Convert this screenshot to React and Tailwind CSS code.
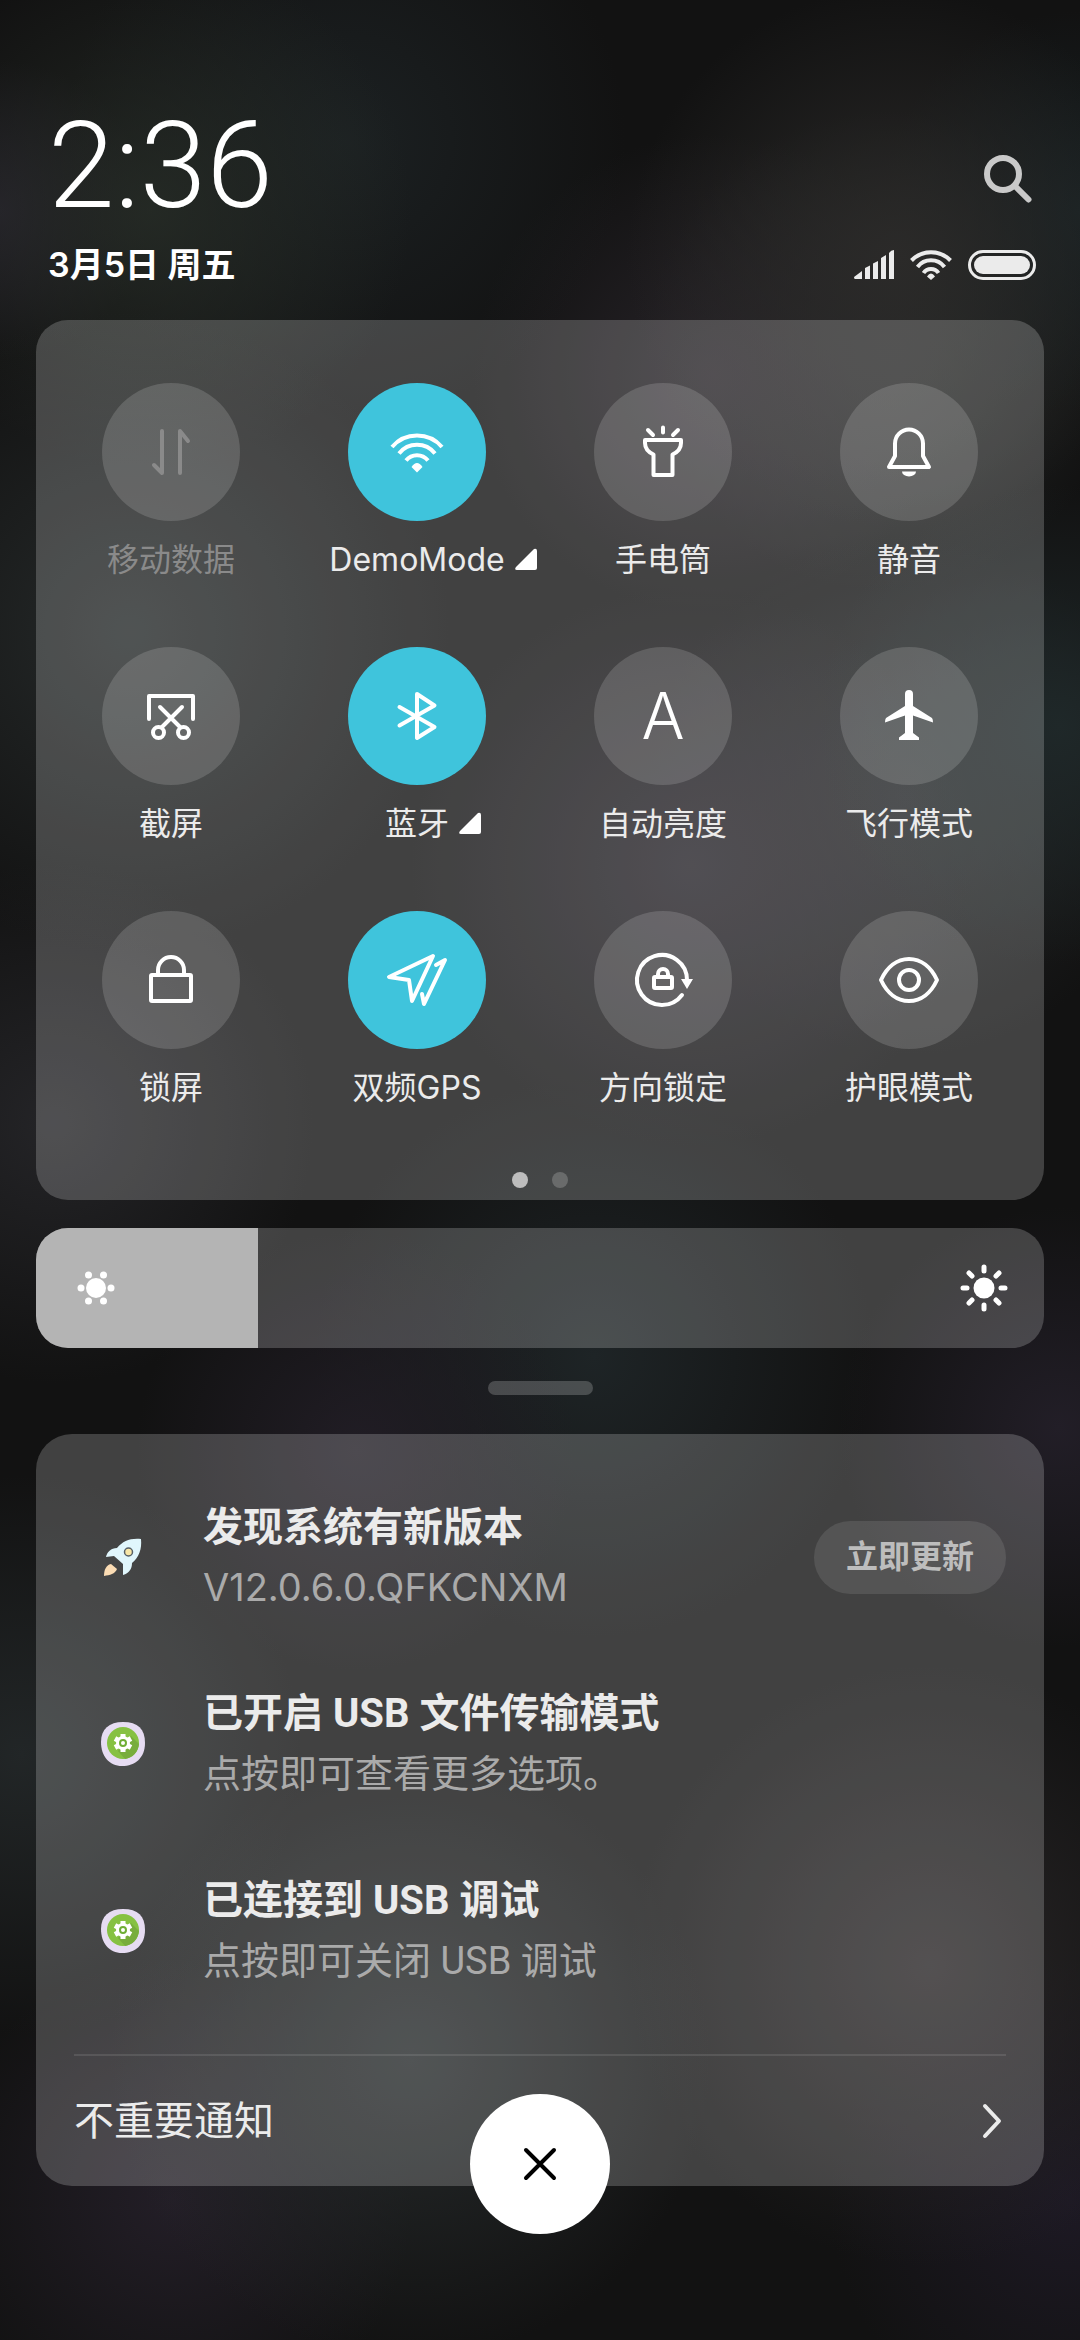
import { useState } from "react";

const Svg = ({ children, className = "w-[60px] h-[60px]" }) => (
    <svg viewBox="0 0 60 60" className={`overflow-visible ${className}`} fill="none" stroke="currentColor" strokeWidth="4" strokeLinecap="round" strokeLinejoin="round" aria-hidden="true">
        {children}
    </svg>
)

const icons = {
    data: <Svg><path d="M21 9V51L13 43M39 51V9L47 19" /></Svg>,
    wifi: (
        <Svg>
            <path strokeLinecap="butt" d="M5 25A33 33 0 0 1 55 25M12 31.500A23 23 0 0 1 48 31.500M19 38.500A14 14 0 0 1 41 38.500" />
            <path fill="currentColor" stroke="none" d="M30 50.500L24.500 45Q30 37 35.500 45Z" />
        </Svg>
    ),
    torch: (
        <Svg>
            <path d="M30 5.500V10.500M15 8L20 13M45 8L40 13" />
            <path d="M12 18H48V21C48 27 45 30 39.500 32.500V53H20.500V32.500C15 30 12 27 12 21Z" />
        </Svg>
    ),
    bell: (
        <Svg>
            <path d="M16 34V21.500A14 14 0 0 1 44 21.500V34L50 45H10Z" />
            <path fill="currentColor" stroke="none" d="M23 49.500H37A7 5 0 0 1 23 49.500Z" />
        </Svg>
    ),
    screenshot: (
        <Svg>
            <path d="M8 33V10H52V33M19 21L39 41M41 21L21 41" />
            <circle cx="17.500" cy="46.500" r="5.500" />
            <circle cx="42.500" cy="46.500" r="5.500" />
        </Svg>
    ),
    bluetooth: <Svg><path d="M12.500 21L47.500 41L30 52V8L47.500 19.500L12.500 39.500" /></Svg>,
    auto: <span className="text-[64px] leading-none font-light">A</span>,
    plane: (
        <Svg>
            <path fill="currentColor" stroke="none" d="M30 4Q34 4 34 8V20L53 32Q54 33 54 36.500L34 29.500V47L40 51.500V54H20V51.500L26 47V29.500L6 36.500Q6 33 7 32L26 20V8Q26 4 30 4Z" />
        </Svg>
    ),
    lock: (
        <Svg>
            <rect x="10" y="25" width="40" height="26" rx="1" />
            <path d="M17 25V20A13 13 0 0 1 43 20V25" />
        </Svg>
    ),
    gps: <Svg><path d="M46 6L2 27L22 30L25 51ZM49 15L58 10L37 54L35 44" /></Svg>,
    rotation: (
        <Svg>
            <path d="M49 45A25 25 0 1 1 54 30" />
            <path fill="currentColor" stroke="none" d="M48 29H60L54 39Z" />
            <rect x="21" y="27" width="18" height="11" rx="1" />
            <path d="M25 27V24A5 5 0 0 1 35 24V27" />
        </Svg>
    ),
    eye: (
        <Svg>
            <path d="M2 30C8 17 18 9 30 9S52 17 58 30C52 43 42 51 30 51S8 43 2 30Z" />
            <circle cx="30" cy="30" r="10" />
        </Svg>
    ),
}

const tiles = [
    { icon: "data", label: "移动数据", disabled: true },
    { icon: "wifi", label: "DemoMode", on: true, more: true },
    { icon: "torch", label: "手电筒" },
    { icon: "bell", label: "静音" },
    { icon: "screenshot", label: "截屏" },
    { icon: "bluetooth", label: "蓝牙", on: true, more: true },
    { icon: "auto", label: "自动亮度" },
    { icon: "plane", label: "飞行模式" },
    { icon: "lock", label: "锁屏" },
    { icon: "gps", label: "双频GPS", on: true },
    { icon: "rotation", label: "方向锁定" },
    { icon: "eye", label: "护眼模式" },
]

const Tile = ({ icon, label, on, more, disabled }) => (
    <button type="button" disabled={disabled} aria-pressed={!!on} className={`flex flex-col items-center gap-[19px] ${disabled ? "text-[#8a8a8a]" : "text-white"}`}>
        <span className={`flex items-center justify-center size-[138px] rounded-full ${on ? "bg-[#3fc4dc]" : "bg-white/15"}`}>
            {icons[icon]}
        </span>
        <span className={`relative text-[32px] leading-10 whitespace-nowrap ${disabled ? "" : "text-[#ebebeb]"}`}>
            {label}
            {more && (
                <svg viewBox="0 0 22 22" className="absolute left-full top-2 ml-[10px] size-[22px] text-white" fill="currentColor" aria-hidden="true">
                    <path d="M19 1Q22 0 22 3V20Q22 22 20 22H2Q-1 22 1 19Z" />
                </svg>
            )}
        </span>
    </button>
)

const StatusIcons = () => (
    <div className="flex items-center text-[#ebebeb]">
        <svg viewBox="0 0 40 30" className="w-10 h-[30px]" fill="currentColor" aria-hidden="true">
            <path d="M0 27L8 21V29H1Q0 29 0 27ZM11 18L16 15.500V29H11ZM19 13.500L24 11V29H19ZM27 8L32 5V29H27ZM35 3Q37 0 40 0V29H35Z" />
        </svg>
        <svg viewBox="0 0 42 30" className="ml-4 w-[42px] h-[30px]" fill="none" stroke="currentColor" strokeWidth="4" aria-hidden="true">
            <path d="M1.500 10.500A27 27 0 0 1 40.500 10.500M7.500 17A17 17 0 0 1 34.500 17M13.500 23A9 9 0 0 1 28.500 23" />
            <path fill="currentColor" stroke="none" d="M21 30L17 26.500Q21 20.500 25 26.500Z" />
        </svg>
        <div className="ml-4 w-[68px] h-[30px] rounded-full border-3 border-current p-[3px]">
            <div className="h-full rounded-full bg-current"></div>
        </div>
    </div>
)

const Brightness = () => {
    const [level, setLevel] = useState(22)
    return (
        <div className="relative mt-7 h-[120px] rounded-[32px] overflow-hidden bg-white/20 flex items-center justify-between px-9 text-white">
            <div className="absolute inset-y-0 left-0 bg-[#b4b4b4]" style={{ width: `${level}%` }}></div>
            <svg viewBox="-24 -24 48 48" className="relative size-12" fill="currentColor" aria-hidden="true">
                <circle r="10" />
                <circle cx="-15" r="3.500" />
                <circle cx="15" r="3.500" />
                <circle cx="-7.500" cy="-13" r="3.500" />
                <circle cx="7.500" cy="-13" r="3.500" />
                <circle cx="-7.500" cy="13" r="3.500" />
                <circle cx="7.500" cy="13" r="3.500" />
            </svg>
            <svg viewBox="-24 -24 48 48" className="relative size-12" fill="currentColor" stroke="currentColor" strokeWidth="5" strokeLinecap="round" aria-hidden="true">
                <circle r="10.500" stroke="none" />
                <path d="M0 -21V-17M0 21V17M-21 0H-17M21 0H17M-15 -15L-12 -12M15 -15L12 -12M-15 15L-12 12M15 15L12 12" />
            </svg>
            <input type="range" aria-label="亮度" min="0" max="100" value={level} onChange={(e) => setLevel(e.target.value)} className="absolute inset-0 w-full h-full opacity-0" />
        </div>
    )
}

const Rocket = () => (
    <svg viewBox="0 0 40 40" className="size-10" aria-hidden="true">
        <path fill="#e0f6fc" d="M38 2C27 1 20 4 14 11C8 11 4 15 3 20L11 19L20 27L20 38C26 36 29 32 29 26C36 20 39 12 38 2Z" />
        <path fill="#fbdcb4" d="M8 27C3 28 1 33 1 39C7 38 12 37 14 32Z" />
        <circle cx="25.500" cy="15" r="4" fill="#f8e7a8" stroke="#566068" strokeWidth="1.500" />
    </svg>
)

const UsbIcon = () => (
    <svg viewBox="0 0 44 44" className="size-11" aria-hidden="true">
        <path fill="#e6dcf2" d="M22 0C37 0 44 7 44 21C44 36 34 44 21 44C8 44 0 34 0 20C0 7 8 0 22 0Z" />
        <circle cx="22" cy="21" r="16" fill="#86c142" />
        <path fill="#78ad3c" d="M17 29L24 37Q36 35 38 22L30 14Z" />
        <path stroke="#fff" strokeWidth="5" d="M22 12V30M14 16.500L30 25.500M30 16.500L14 25.500" />
        <circle cx="22" cy="21" r="7" fill="#fff" />
        <circle cx="22" cy="21" r="3" fill="#fff" stroke="#6fae35" strokeWidth="2" />
    </svg>
)

const notifications = [
    { icon: <Rocket />, title: "发现系统有新版本", text: "V12.0.6.0.QFKCNXM", action: "立即更新", font: "" },
    { icon: <UsbIcon />, title: "已开启 USB 文件传输模式", text: "点按即可查看更多选项。", font: "font-[Roboto,'Noto_Sans_CJK_SC',sans-serif]" },
    { icon: <UsbIcon />, title: "已连接到 USB 调试", text: "点按即可关闭 USB 调试", font: "font-[Roboto,'Noto_Sans_CJK_SC',sans-serif]" },
]

const Notification = ({ icon, title, text, action, font }) => (
    <li className={`flex items-center ${font}`}>
        <div className="w-[98px] flex justify-center">{icon}</div>
        <div className="ml-[31px] flex-1">
            <h2 className="text-[40px] leading-[60px] font-bold text-[#ebebeb]">{title}</h2>
            <p className="text-[38px] leading-[60px] text-[#aaaaaa]">{text}</p>
        </div>
        {action && <button type="button" className="h-[73px] px-8 rounded-full bg-white/10 text-[32px] font-bold text-[#bdbdbd]">{action}</button>}
    </li>
)

const App = () => {
    return (
        <div lang="zh-CN" className="relative min-h-screen bg-[#121212] font-[Inter,'Noto_Sans_CJK_SC',sans-serif] px-9">
            {/* blurred wallpaper glow */}
            <div aria-hidden="true" className="absolute inset-0 bg-[radial-gradient(circle_at_14%_9%,#282e28cc,transparent_260px),radial-gradient(circle_at_32%_6%,#1e2426cc,transparent_280px),radial-gradient(circle_at_0%_9%,#24202a,transparent_150px),radial-gradient(circle_at_83%_11%,#2b2a29,transparent_270px),radial-gradient(circle_at_100%_9%,#182123,transparent_200px),radial-gradient(circle_at_66%_16%,#272328,transparent_240px),radial-gradient(circle_at_82%_15%,#262a28,transparent_240px)]"></div>
            <div aria-hidden="true" className="absolute inset-0 bg-[radial-gradient(circle_at_12%_27%,#252929,transparent_320px),radial-gradient(circle_at_98%_31%,#1f2829,transparent_240px),radial-gradient(circle_at_64%_37%,#262329,transparent_280px),radial-gradient(circle_at_84%_34%,#232526,transparent_260px),radial-gradient(circle_at_5%_48%,#242427,transparent_260px),radial-gradient(circle_at_55%_58%,#1e2426,transparent_280px),radial-gradient(circle_at_98%_61%,#221e27,transparent_220px)]"></div>
            <div aria-hidden="true" className="absolute inset-0 bg-[radial-gradient(circle_at_33%_62%,#211d25,transparent_220px),radial-gradient(circle_at_2%_75%,#222627,transparent_280px),radial-gradient(circle_at_38%_88%,#262a2b,transparent_300px),radial-gradient(circle_at_86%_84%,#292627,transparent_300px),radial-gradient(circle_at_16%_94%,#231e27,transparent_240px),radial-gradient(circle_at_99%_94%,#1d1924,transparent_240px)]"></div>

            <div className="relative">
                <header className="pl-3 pr-2 pt-[110px] text-white">
                    <div className="flex justify-between">
                        <time className="font-[Roboto,sans-serif] font-light text-[120px] leading-[112px]">2:36</time>
                        <button type="button" aria-label="搜索" className="self-end mb-[19px] mr-1 text-[#c9c9c9]">
                            <svg viewBox="0 0 48 48" className="size-12" fill="none" stroke="currentColor" strokeWidth="6" strokeLinecap="round" aria-hidden="true">
                                <circle cx="19" cy="19" r="16" />
                                <path d="M31 31L44.500 44.500" />
                            </svg>
                        </button>
                    </div>
                    <div className="mt-[21px] h-11 flex items-center justify-between">
                        <p className="text-[34px] leading-[44px] font-semibold">3月5日 周五</p>
                        <StatusIcons />
                    </div>
                </header>

                <main>
                    <section className="mt-[33px] rounded-[32px] bg-white/20 px-3 pt-[63px] pb-3">
                        <div className="grid grid-cols-4 gap-y-[67px]">
                            {tiles.map((tile) => <Tile key={tile.icon} {...tile} />)}
                        </div>
                        <div className="mt-16 flex justify-center gap-6">
                            <span className="size-4 rounded-full bg-[#bdbdbd]"></span>
                            <span className="size-4 rounded-full bg-white/20"></span>
                        </div>
                    </section>

                    <Brightness />

                    <div className="mx-auto mt-[33px] h-[14px] w-[105px] rounded-full bg-white/20"></div>

                    <section className="relative mt-[39px] rounded-[36px] bg-white/20 px-[38px] pt-[63px]">
                        <ul className="flex flex-col gap-[67px] pb-[63px]">
                            {notifications.map((item) => <Notification key={item.title} {...item} />)}
                        </ul>
                        <a href="#more" className="flex items-center justify-between h-[132px] border-t-2 border-white/10 text-[40px] text-[#ebebeb]">
                            不重要通知
                            <svg viewBox="0 0 20 36" className="mr-1 w-5 h-9" fill="none" stroke="currentColor" strokeWidth="4" strokeLinecap="round" strokeLinejoin="round" aria-hidden="true">
                                <path d="M3 3L17 18L3 33" />
                            </svg>
                        </a>
                        <button type="button" aria-label="清除全部" className="absolute left-1/2 -bottom-12 -translate-x-1/2 size-[140px] rounded-full bg-white text-black flex items-center justify-center">
                            <svg viewBox="0 0 34 34" className="size-[34px]" stroke="currentColor" strokeWidth="4" strokeLinecap="round" aria-hidden="true">
                                <path d="M3 3L31 31M31 3L3 31" />
                            </svg>
                        </button>
                    </section>
                </main>
            </div>
        </div>
    )
}

export default App
